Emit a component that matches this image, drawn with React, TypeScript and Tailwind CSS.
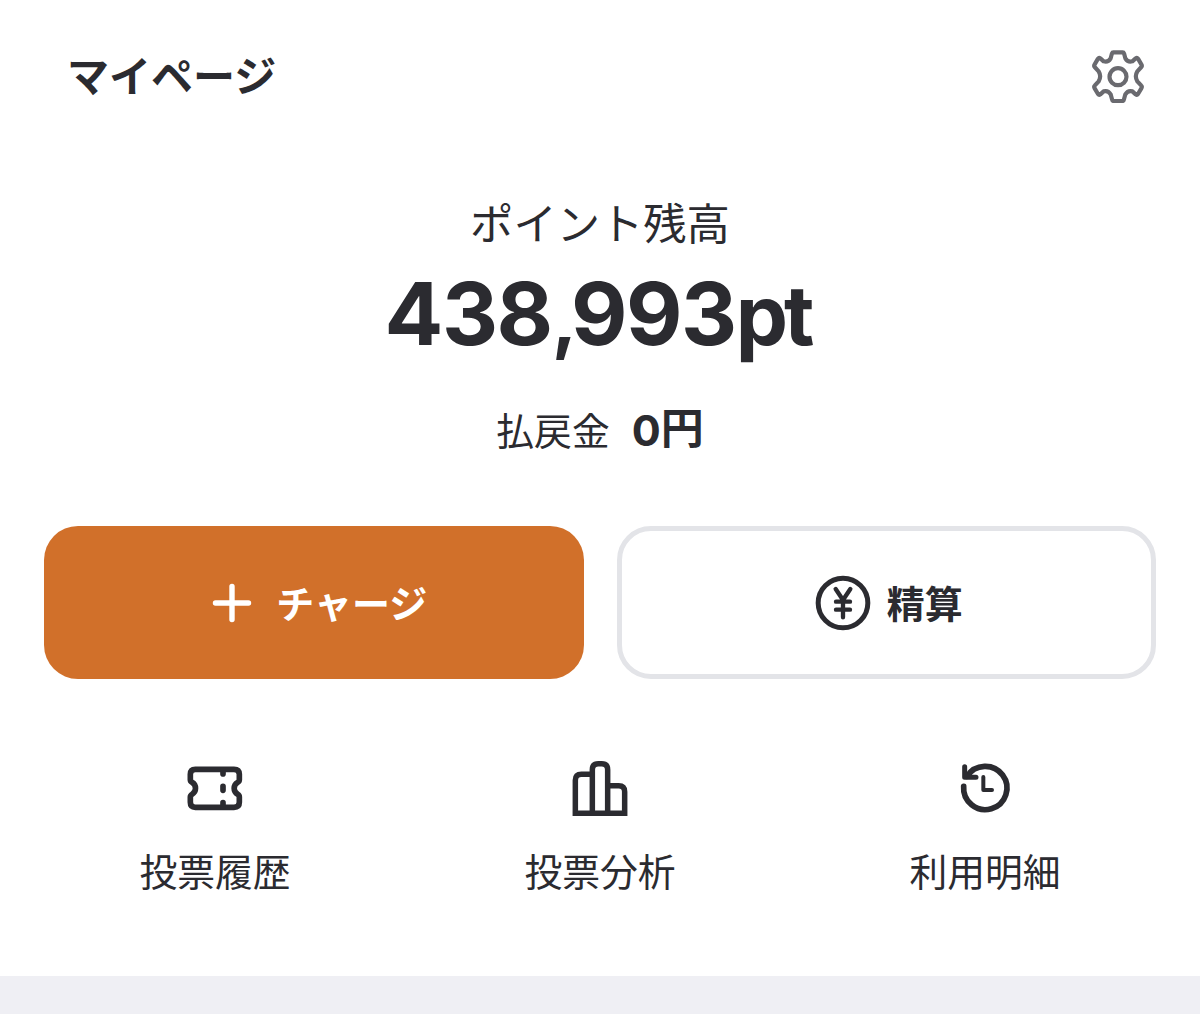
import React from 'react';

interface ShortcutProps {
    label: string;
    children: React.ReactNode;
}

const GearIcon: React.FC = () => (
    <svg className="h-[54px] w-[54px]" viewBox="33 26 162 162" fill="none" stroke="#6a6a6f" strokeWidth="12.5" strokeLinejoin="round">
        <path d="M100 36H128Q131 36 132 39L136 54Q144 67 157 63L167 54Q171 51 174 55L184 72Q187 77 184 80L172 93Q163 108 172 123L184 136Q187 139 184 144L174 161Q171 165 167 162L157 153Q144 149 136 162L132 177Q131 182 128 182H100Q97 182 96 177L92 162Q84 149 71 153L61 162Q57 165 54 161L44 144Q41 139 44 136L56 123Q65 108 56 93L44 80Q41 77 44 72L54 55Q57 51 61 54L71 63Q84 67 92 54L96 39Q97 36 100 36Z" />
        <circle cx="114" cy="109" r="25.500" />
    </svg>
);

const PlusIcon: React.FC = () => (
    <svg className="h-10 w-10" viewBox="0 0 40 40" fill="none" stroke="currentColor" strokeWidth="5.4" strokeLinecap="round">
        <path d="M20 3.5V36.5M3.5 20H36.5" />
    </svg>
);

const YenIcon: React.FC = () => (
    <svg className="h-14 w-14" viewBox="44 29 168 168" fill="none" stroke="currentColor" strokeWidth="13" strokeLinecap="round" strokeLinejoin="round">
        <circle cx="128" cy="113" r="74.500" strokeWidth="15" />
        <path d="M106 71L128 104L150 71M128 104V156M107 109H149M107 133H149" />
    </svg>
);

const TicketIcon: React.FC = () => (
    <svg className="h-[60px] w-[60px]" viewBox="29 12 180 180" fill="none" stroke="currentColor" strokeWidth="17" strokeLinejoin="round">
        <path d="M60 43H176Q192 43 192 58V74Q192 79 187 82C173 90 173 110 187 118Q192 121 192 126V142Q192 157 176 157H60Q45 157 45 142V126Q45 121 50 118C64 110 64 90 50 82Q45 79 45 74V58Q45 43 60 43Z" />
        <path d="M143 45V57M143 94V106M143 143V155" strokeLinecap="round" />
    </svg>
);

const ChartIcon: React.FC = () => (
    <svg className="h-[60px] w-[60px]" viewBox="30 12 180 180" fill="none" stroke="currentColor" strokeWidth="16.5">
        <path d="M46 175V76Q46 58 64 58H97M97 175V44Q97 26 115 26H125Q143 26 143 44V175M143 92H176Q194 92 194 110V175M37.700 175H202.300" />
    </svg>
);

const HistoryIcon: React.FC = () => (
    <svg className="h-[60px] w-[60px]" viewBox="30 12 180 180" fill="none" stroke="currentColor" strokeWidth="17" strokeLinecap="round" strokeLinejoin="round">
        <path d="M56 94A65 65 0 1 0 66 64" />
        <path d="M59 35V67H93" strokeWidth="15" />
        <path d="M115 66V105H141" strokeWidth="12" />
    </svg>
);

const Shortcut: React.FC<ShortcutProps> = ({ label, children }) => (
    <button className="flex w-[385px] flex-col items-center">
        {children}
        <span className="mt-[23px] text-[37.800px] leading-[56px]">{label}</span>
    </button>
);

const App: React.FC = () => (
    <div className="flex h-[1014px] w-[1200px] flex-col overflow-hidden bg-[#efeff4] font-['Noto_Sans_CJK_JP',sans-serif] text-[#2b2b30]">
        <main className="h-[976px] bg-white">
            <header className="flex h-[152px] items-center justify-between pl-[67px] pr-[55px]">
                <h1 className="pb-1 text-[42px] font-bold leading-[60px]">マイページ</h1>
                <button aria-label="設定">
                    <GearIcon />
                </button>
            </header>

            <section className="flex flex-col items-center pt-[37px]">
                <p className="text-[43.300px] leading-[64px]">ポイント残高</p>
                <p className="mt-[8px] h-[106px] whitespace-nowrap pr-[5px] font-['Inter',sans-serif] text-[87px] font-bold leading-[106px] tracking-[-1.500px]">
                    438<span className="text-[76px] tracking-[-6px]">,</span>993<span className="text-[83px] tracking-[-4px]">pt</span>
                </p>
                <p className="mt-[30px] flex h-16 items-center leading-[64px]">
                    <span className="text-[37.800px]">払戻金</span>
                    <span className="ml-[22px] flex items-center text-[43px] font-bold">
                        <span className="pt-px font-['Inter',sans-serif]">0</span>
                        <span className="pb-[9px] leading-[56px]">円</span>
                    </span>
                </p>
            </section>

            <div className="mt-[65px] grid grid-cols-2 gap-[33px] px-[44px] text-[38px] font-bold">
                <button className="flex h-[153px] items-center justify-center gap-6 rounded-[34px] bg-[#d1702a] pl-3 text-white">
                    <PlusIcon />
                    <span className="pb-[3px]">チャージ</span>
                </button>
                <button className="flex h-[153px] items-center justify-center gap-4 rounded-[34px] border-[5px] border-[#e3e4e8] pl-[5px]">
                    <YenIcon />
                    <span className="pb-[3px]">精算</span>
                </button>
            </div>

            <nav className="mt-[80px] flex justify-center">
                <Shortcut label="投票履歴">
                    <TicketIcon />
                </Shortcut>
                <Shortcut label="投票分析">
                    <ChartIcon />
                </Shortcut>
                <Shortcut label="利用明細">
                    <HistoryIcon />
                </Shortcut>
            </nav>
        </main>
    </div>
);

export default App;
